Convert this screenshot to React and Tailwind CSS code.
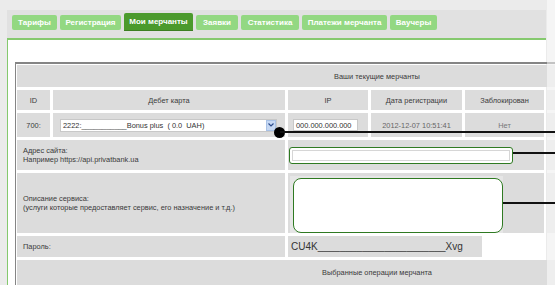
import React from "react";

const tabs = [
  { label: "Тарифы", w: "w-[45px]" },
  { label: "Регистрация", w: "w-[61px]" },
  { label: "Мои мерчанты", w: "w-[69px]", active: true },
  { label: "Заявки", w: "w-[42px]" },
  { label: "Статистика", w: "w-[58px]" },
  { label: "Платежи мерчанта", w: "w-[85px]" },
  { label: "Ваучеры", w: "w-[47px]" },
];

function Cell({ className = "", children }) {
  return (
    <div className={"bg-[#dcdcdc] flex items-center text-[#3a3a3a] " + className}>
      {children}
    </div>
  );
}

export default function App() {
  return (
    <div className="relative w-[555px] h-[285px] overflow-hidden bg-[#ebebeb] font-['Liberation_Sans',Arial,sans-serif] text-[7.4px] leading-[9px]">
      <div className="ml-[7px] w-[539px] mt-[10px]">
        {/* tab bar */}
        <div className="h-[28px] bg-[#e1e1e1] flex items-start gap-[3px] pl-[5px] pt-[3px]">
          {tabs.map((t) =>
            t.active ? (
              <div
                key={t.label}
                className={t.w + " h-[18px] bg-[#4b9a2c] border-b border-[#3c7f22] rounded-t-[2px] flex items-center justify-center text-white font-bold text-[8px]"}
              >
                {t.label}
              </div>
            ) : (
              <div
                key={t.label}
                className={t.w + " h-[15px] mt-[2px] bg-[#93d882] rounded-[2px] flex items-center justify-center text-white font-bold text-[8px]"}
              >
                {t.label}
              </div>
            )
          )}
        </div>
        {/* content */}
        <div className="border-t-2 border-l border-[#85c96e] bg-white h-[260px]">
          <div className="ml-[7px] mt-[22px] w-[730px] border-t-2 border-l border-[#858585] pt-[1px] pl-[1px]">
            <div className="grid grid-cols-[33px_232px_80px_91px_79px_190px] grid-rows-[22px_20px_24px_30px_60px_21px_25px] gap-[3px]">
              {/* title */}
              <Cell className="col-span-6 justify-center">Ваши текущие мерчанты</Cell>
              {/* headers */}
              <Cell className="justify-center">ID</Cell>
              <Cell className="justify-center">Дебет карта</Cell>
              <Cell className="justify-center">IP</Cell>
              <Cell className="justify-center">Дата регистрации</Cell>
              <Cell className="justify-center">Заблокирован</Cell>
              <Cell />
              {/* row 700 */}
              <Cell className="justify-center">700:</Cell>
              <Cell className="pl-[7px] pr-[8px]">
                <div className="flex-1 h-[13px] bg-white border border-[#c8c8c8] flex items-center pl-[2px] text-[#333]">
                  <span className="flex-1 whitespace-pre">2222:___________Bonus plus  ( 0.0  UAH)</span>
                  <span className="w-[10px] h-[11px] bg-[#c6d8f3] border border-[#a9c2e6] flex items-center justify-center">
                    <svg width="6" height="4" viewBox="0 0 6 4">
                      <path d="M0.5 0.5 L3 3 L5.5 0.5" fill="none" stroke="#2b4b8c" strokeWidth="1.2" />
                    </svg>
                  </span>
                </div>
              </Cell>
              <Cell className="pl-[5px]">
                <div className="w-[65px] h-[12px] bg-white border border-[#c8c8c8] flex items-center pl-[2px] text-[#333]">
                  000.000.000.000
                </div>
              </Cell>
              <Cell className="justify-center text-[#666]">2012-12-07 10:51:41</Cell>
              <Cell className="justify-center text-[#777]">Нет</Cell>
              <Cell />
              {/* address */}
              <Cell className="col-span-2 pl-[6px]">
                <div>
                  <div>Адрес сайта:</div>
                  <div>Например https://api.privatbank.ua</div>
                </div>
              </Cell>
              <Cell className="col-span-3 pl-[1px]">
                <div className="w-[224px] h-[17px] border-[1.5px] border-[#2f7a22] rounded-[3px] bg-white p-[2px]">
                  <div className="w-full h-full border border-[#d6d6d6] bg-white" />
                </div>
              </Cell>
              <Cell />
              {/* description */}
              <Cell className="col-span-2 pl-[6px]">
                <div>
                  <div>Описание сервиса:</div>
                  <div>(услуги которые предоставляет сервис, его назначение и т.д.)</div>
                </div>
              </Cell>
              <Cell className="col-span-3 pl-[2px] items-end">
                <div className="w-[213px] h-[57px] bg-[#e6e6e6] flex items-end justify-end">
                  <div className="w-[210px] h-[55px] border-[1.5px] border-[#2f7a22] rounded-[8px] bg-white" />
                </div>
              </Cell>
              <Cell />
              {/* password */}
              <Cell className="col-span-2 pl-[6px]">Пароль:</Cell>
              <div className="col-span-4 flex">
                <div className="w-[194px] bg-[#dcdcdc] flex items-center pl-[3px] text-[10px] text-[#333] whitespace-pre">
                  CU4K_______________________Xvg
                </div>
              </div>
              {/* last */}
              <Cell className="col-span-6 justify-center">Выбранные операции мерчанта</Cell>
            </div>
          </div>
        </div>
      </div>

      {/* faded right edge */}
      <div className="absolute left-[547px] top-0 w-[8px] h-full bg-white/50" />

      {/* annotation connectors */}
      <div className="absolute left-[274px] top-[127px] w-[11px] h-[11px] rounded-full bg-black" />
      <div className="absolute left-[280px] top-[131px] w-[275px] h-[2px] bg-[#111]" />
      <div className="absolute left-[513px] top-[152px] w-[42px] h-[2px] bg-[#111]" />
      <div className="absolute left-[503px] top-[202px] w-[52px] h-[2px] bg-[#111]" />
    </div>
  );
}
